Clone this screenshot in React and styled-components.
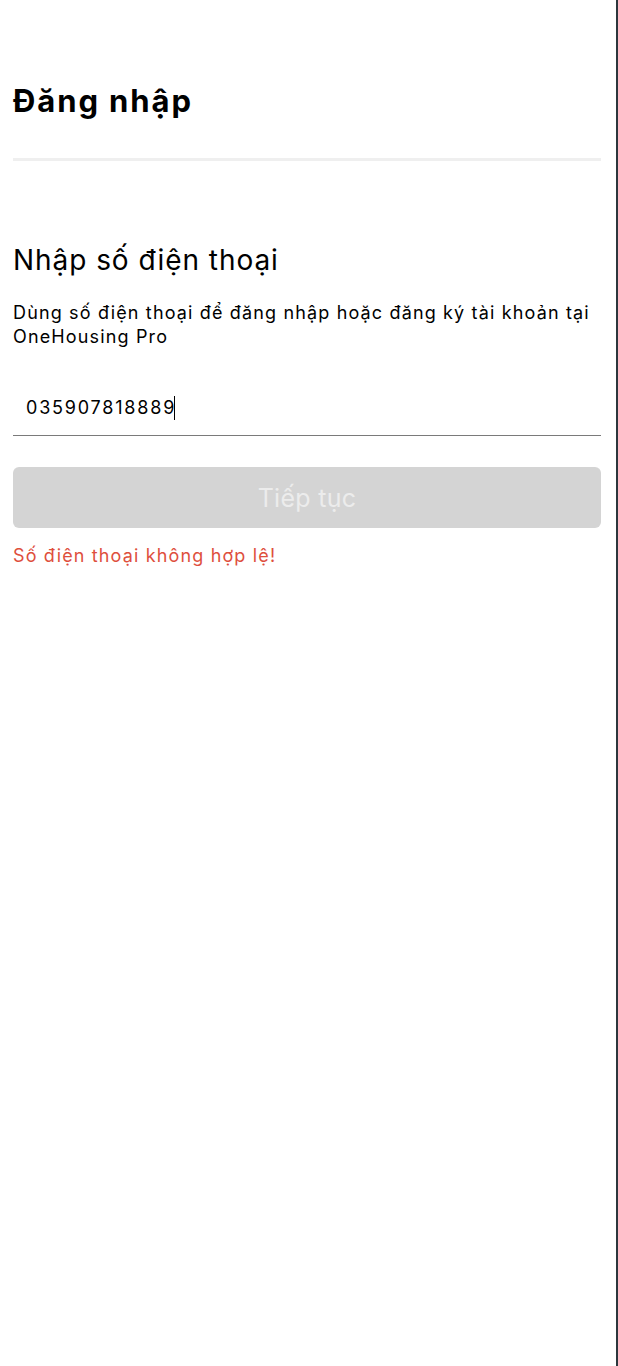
import React from 'react'
import styled, { createGlobalStyle } from 'styled-components'

const GlobalStyle = createGlobalStyle`
  html, body {
    margin: 0;
    padding: 0;
    background: #ffffff;
  }
  body {
    font-family: Inter, 'Noto Sans', sans-serif;
    color: #000000;
  }
`

const App = () => {
  return (
    <>
      <GlobalStyle />
      <Frame>
        <Page>
          <Header>
            <Title>Đăng nhập</Title>
          </Header>
          <Divider />
          <Form>
            <Heading>Nhập số điện thoại</Heading>
            <Hint>Dùng số điện thoại để đăng nhập hoặc đăng ký tài khoản tại OneHousing Pro</Hint>
            <PhoneField>
              <PhoneValue>035907818889</PhoneValue>
              <Caret />
            </PhoneField>
            <SubmitBtn disabled>Tiếp tục</SubmitBtn>
            <ErrorText>Số điện thoại không hợp lệ!</ErrorText>
          </Form>
        </Page>
        <EdgeBar />
      </Frame>
    </>
  )
}

const Frame = styled.div`
  display: flex;
  width: 618px;
  min-height: 1366px;
`

const Page = styled.div`
  flex: 1;
  padding: 0 15px 0 13px;
`

const EdgeBar = styled.div`
  width: 2px;
  background: #2c373d;
`

const Header = styled.div`
  height: 158px;
  display: flex;
  align-items: flex-start;
  padding-top: 80px;
  box-sizing: border-box;
`

const Title = styled.h1`
  margin: 0;
  font-size: 31px;
  font-weight: 700;
  line-height: 42px;
  letter-spacing: 1.9px;
`

const Divider = styled.div`
  height: 3px;
  background: #efefef;
`

const Form = styled.div`
  display: flex;
  flex-direction: column;
  padding-top: 81px;
`

const Heading = styled.h2`
  margin: 0;
  font-size: 28px;
  font-weight: 400;
  line-height: 36px;
  letter-spacing: 0.95px;
`

const Hint = styled.p`
  margin: 23px 0 0;
  font-size: 18px;
  line-height: 24px;
  letter-spacing: 1.15px;
`

const PhoneField = styled.div`
  margin-top: 39px;
  height: 40px;
  display: flex;
  align-items: center;
  padding: 0 0 7px 13px;
  border-bottom: 1px solid #7a7a7a;
`

const PhoneValue = styled.span`
  font-size: 18px;
  line-height: 24px;
  letter-spacing: 1.8px;
  margin-right: -1.8px;
`

const Caret = styled.span`
  width: 1px;
  height: 24px;
  background: #000;
`

const SubmitBtn = styled.button`
  margin-top: 31px;
  height: 61px;
  border: none;
  border-radius: 6px;
  background: #d4d4d4;
  color: #ececec;
  font-family: Inter, 'Noto Sans', sans-serif;
  font-size: 25px;
  font-weight: 400;
  letter-spacing: 0.3px;
`

const ErrorText = styled.p`
  margin: 16px 0 0;
  font-size: 18px;
  line-height: 24px;
  color: #de4f3d;
  letter-spacing: 1.15px;
`

export default App
